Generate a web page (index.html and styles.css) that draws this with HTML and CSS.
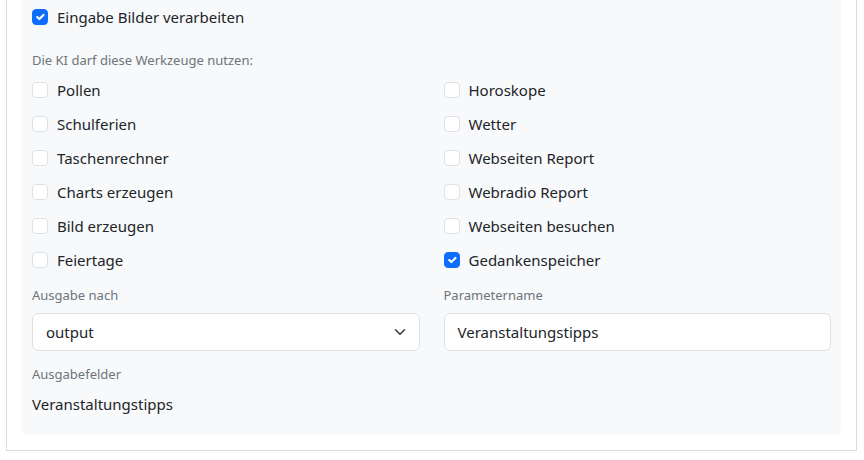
FILE: index.html
```html
<!DOCTYPE html>
<html lang="de">
<head>
  <meta charset="UTF-8" />
  <title>KI Einstellungen</title>
  <link rel="stylesheet" href="styles.css">
</head>
<body>
  <div class="card">
    <div class="panel">
      <label class="check top-check">
        <span class="box checked"><svg viewBox="0 0 20 20"><path d="m6 10 3 3 6-6"/></svg></span>
        <span>Eingabe Bilder verarbeiten</span>
      </label>

      <div class="small-label tools-label">Die KI darf diese Werkzeuge nutzen:</div>

      <div class="tool-grid">
        <label class="check"><span class="box"></span><span>Pollen</span></label>
        <label class="check"><span class="box"></span><span>Horoskope</span></label>
        <label class="check"><span class="box"></span><span>Schulferien</span></label>
        <label class="check"><span class="box"></span><span>Wetter</span></label>
        <label class="check"><span class="box"></span><span>Taschenrechner</span></label>
        <label class="check"><span class="box"></span><span>Webseiten Report</span></label>
        <label class="check"><span class="box"></span><span>Charts erzeugen</span></label>
        <label class="check"><span class="box"></span><span>Webradio Report</span></label>
        <label class="check"><span class="box"></span><span>Bild erzeugen</span></label>
        <label class="check"><span class="box"></span><span>Webseiten besuchen</span></label>
        <label class="check"><span class="box"></span><span>Feiertage</span></label>
        <label class="check"><span class="box checked"><svg viewBox="0 0 20 20"><path d="m6 10 3 3 6-6"/></svg></span><span>Gedankenspeicher</span></label>
      </div>

      <div class="field-row">
        <div class="field">
          <div class="small-label">Ausgabe nach</div>
          <div class="select">
            <span>output</span>
            <svg class="chevron" width="12" height="12" viewBox="0 0 16 16"><path d="M2 5l6 6 6-6"/></svg>
          </div>
        </div>
        <div class="field">
          <div class="small-label">Parametername</div>
          <div class="input">Veranstaltungstipps</div>
        </div>
      </div>

      <div class="small-label out-label">Ausgabefelder</div>
      <div class="out-value">Veranstaltungstipps</div>
    </div>
  </div>
</body>
</html>
```

FILE: styles.css
```css
body {
  font-family: 'Noto Sans', 'Open Sans', sans-serif;
  font-size: 15px;
  color: #212529;
  margin: 0;
  padding: 0 7px 0 6px;
  background: #fff;
}

.card {
  border: 1px solid #dcdcdc;
  border-top: none;
  padding: 0 15px 15px 15px;
}

.panel {
  background: #f8f9fa;
  border-radius: 0 0 6px 6px;
  padding: 5px 10px 19px 10px;
}

.check {
  display: flex;
  align-items: center;
  gap: 9px;
  height: 24px;
}

.box {
  width: 16px;
  height: 16px;
  box-sizing: border-box;
  border: 1px solid #dee2e6;
  border-radius: 4px;
  background: #fff;
  flex-shrink: 0;
  display: flex;
}

.box svg {
  width: 100%;
  height: 100%;
}

.box svg path {
  fill: none;
  stroke: #fff;
  stroke-width: 3;
  stroke-linecap: round;
  stroke-linejoin: round;
}

.box.checked {
  background: #0d6efd;
  border-color: #0d6efd;
}

.small-label {
  font-size: 13px;
  color: #6c757d;
  line-height: 20px;
}

.tools-label {
  margin-top: 21px;
  margin-bottom: 8px;
}

.tool-grid {
  display: grid;
  grid-template-columns: 1fr 1fr;
  column-gap: 24px;
  row-gap: 10px;
}

.field-row {
  display: grid;
  grid-template-columns: 1fr 1fr;
  column-gap: 24px;
  margin-top: 13px;
}

.small-label + .select,
.small-label + .input {
  margin-top: 8px;
}

.select,
.input {
  height: 38px;
  box-sizing: border-box;
  border: 1px solid #dee2e6;
  border-radius: 6px;
  background: #fff;
  padding: 0 13px;
  display: flex;
  align-items: center;
  justify-content: space-between;
}

.chevron path {
  fill: none;
  stroke: #343a40;
  stroke-width: 2;
  stroke-linecap: round;
  stroke-linejoin: round;
}

.out-label {
  margin-top: 13px;
}

.out-value {
  margin-top: 8px;
  line-height: 24px;
}
```
